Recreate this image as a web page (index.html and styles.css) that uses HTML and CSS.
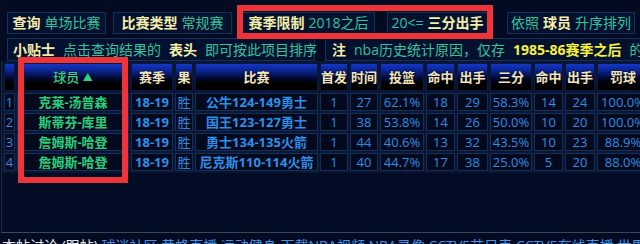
FILE: index.html
```html
<!DOCTYPE html>
<html lang="zh-CN">
<head>
<meta charset="utf-8">
<title>单场比赛查询</title>
<link rel="stylesheet" href="styles.css">
</head>
<body>
<div class="page">
  <div class="filters">
    <div class="row">
      <span class="chip chip-query"><b>查询</b>单场比赛</span>
      <span class="chip chip-type"><b>比赛类型</b>常规赛</span>
      <span class="chip chip-season"><b>赛季限制</b>2018之后</span>
      <span class="chip chip-min">20&lt;=<b>三分出手</b></span>
      <span class="chip chip-order">依照<b>球员</b>升序排列</span>
    </div>
    <div class="row row-tips">
      <span class="chip chip-tip"><b>小贴士</b>点击查询结果的<b>表头</b>即可按此项目排序</span>
      <span class="chip chip-note"><b>注</b>nba历史统计原因，仅存<b class="hl">1985-86赛季之后</b>的数据</span>
    </div>
  </div>

  <div class="results">
    <table class="stats">
      <colgroup>
        <col class="c-idx"><col class="c-player"><col class="c-season"><col class="c-res">
        <col class="c-game"><col class="c-start"><col class="c-min"><col class="c-fg">
        <col class="c-fgm"><col class="c-fga"><col class="c-3p"><col class="c-3pm">
        <col class="c-3pa"><col class="c-ft">
      </colgroup>
      <thead>
        <tr>
          <th></th><th class="sorted">球员 <span class="arrow">▲</span></th><th>赛季</th><th>果</th><th>比赛</th><th>首发</th><th>时间</th>
          <th>投篮</th><th>命中</th><th>出手</th><th>三分</th><th>命中</th><th>出手</th><th>罚球</th>
        </tr>
      </thead>
      <tbody>
        <tr>
          <td>1</td><td class="name">克莱-汤普森</td><td class="bold">18-19</td><td>胜</td><td class="bold">公牛124-149勇士</td>
          <td>1</td><td>27</td><td>62.1%</td><td>18</td><td>29</td><td>58.3%</td><td>14</td><td>24</td><td>100.0%</td>
        </tr>
        <tr>
          <td>2</td><td class="name">斯蒂芬-库里</td><td class="bold">18-19</td><td>胜</td><td class="bold">国王123-127勇士</td>
          <td>1</td><td>38</td><td>53.8%</td><td>14</td><td>26</td><td>50.0%</td><td>10</td><td>20</td><td>100.0%</td>
        </tr>
        <tr>
          <td>3</td><td class="name">詹姆斯-哈登</td><td class="bold">18-19</td><td>胜</td><td class="bold">勇士134-135火箭</td>
          <td>1</td><td>44</td><td>40.6%</td><td>13</td><td>32</td><td>43.5%</td><td>10</td><td>23</td><td>88.9%</td>
        </tr>
        <tr>
          <td>4</td><td class="name">詹姆斯-哈登</td><td class="bold">18-19</td><td>胜</td><td class="bold">尼克斯110-114火箭</td>
          <td>1</td><td>40</td><td>44.7%</td><td>17</td><td>38</td><td>25.0%</td><td>5</td><td>20</td><td>88.0%</td>
        </tr>
      </tbody>
    </table>
  </div>

  <div class="footer"><span class="footer-title">本帖讨论 (跟帖)</span> 球迷社区 黄蜂直播 运动健身 下载NBA视频 NBA录像 CCTV5节目表 CCTV5在线直播 世界杯录像 直播</div>

  <div class="mark mark-season"></div>
  <div class="mark mark-player"></div>
</div>
</body>
</html>
```

FILE: styles.css
```css
html, body {
  margin: 0;
  padding: 0;
  background: #020b21;
}

body {
  width: 640px;
  height: 244px;
  overflow: hidden;
  font-family: "Open Sans", "Noto Sans CJK SC", sans-serif;
}

.page {
  position: relative;
  width: 640px;
  height: 244px;
  overflow: hidden;
}

/* filter chips */
.filters {
  display: flex;
  flex-direction: column;
  gap: 4px;
  padding: 12px 0 0 7px;
}

.row {
  display: flex;
  white-space: nowrap;
}

.chip {
  box-sizing: border-box;
  flex-shrink: 0;
  display: flex;
  align-items: center;
  justify-content: center;
  gap: 4px;
  height: 22px;
  padding: 0 5px;
  border: 1px solid #15305a;
  background: #03112e;
  color: #2fc3a0;
  font-size: 14px;
  line-height: 20px;
}

.chip b {
  color: #f6eea8;
  font-weight: 700;
}

.chip b.hl {
  color: #f4f23c;
}

.chip-query  { width: 99px; }
.chip-type   { width: 119px; margin-left: 7px; }
.chip-season { width: 133px; margin-left: 10px; }
.chip-min    { width: 101px; margin-left: 12px; }
.chip-order  { width: 128px; margin-left: 19px; }

.row-tips .chip {
  height: 23px;
  gap: 8px;
}

.chip-tip {
  width: 308px;
  justify-content: flex-start;
}

.chip-note {
  margin-left: 10px;
  justify-content: flex-start;
  padding-left: 6px;
}

/* result table */
.results {
  box-sizing: border-box;
  width: 640px;
  height: 172px;
  margin-left: 1px;
  border-left: 1px solid #1b2a44;
  border-bottom: 1px solid #3a4657;
  background: #020c24;
  overflow: hidden;
}

.stats {
  table-layout: fixed;
  width: 649px;
  border-collapse: separate;
  border-spacing: 2px;
  background: #081633;
  font-size: 13px;
}

.c-idx    { width: 11px; }
.c-player { width: 112px; }
.c-season { width: 42px; }
.c-res    { width: 18px; }
.c-game   { width: 123px; }
.c-start  { width: 28px; }
.c-min    { width: 28px; }
.c-fg     { width: 44px; }
.c-fgm    { width: 29px; }
.c-fga    { width: 31px; }
.c-3p     { width: 42px; }
.c-3pm    { width: 29px; }
.c-3pa    { width: 30px; }
.c-ft     { width: 52px; }

.stats th,
.stats td {
  padding: 0;
  text-align: center;
  white-space: nowrap;
  overflow: hidden;
}

.stats th {
  height: 26px;
  line-height: 26px;
  border: 1px solid #0a1840;
  background: linear-gradient(to bottom, #1437c6 0%, #0b2592 25%, #020830 55%, #000 75%, #000 100%);
  color: #f3e6bd;
  font-weight: 700;
  text-shadow: 0 0 2px #000;
}

.stats th.sorted {
  color: #30d08a;
  font-weight: 500;
}

.arrow {
  font-size: 10px;
  vertical-align: 1px;
}

.stats td {
  height: 16px;
  line-height: 16px;
  border: 1px solid #12305a;
  background: #040a1d;
  color: #2b8de4;
}

.stats td.bold {
  font-weight: 700;
  color: #2a90ea;
}

.stats td.name {
  font-weight: 700;
  color: #25cf7c;
}

/* footer links */
.footer {
  padding: 3px 0 0 2px;
  font-size: 14px;
  line-height: 20px;
  color: #3b98ee;
  white-space: nowrap;
}

.footer-title {
  color: #e8ecf2;
}

/* red annotation frames laid over the screenshot */
.mark {
  position: absolute;
  box-sizing: border-box;
  border: 6px solid #ee3339;
}

.mark-season {
  left: 237px;
  top: 5px;
  width: 256px;
  height: 34px;
}

.mark-player {
  left: 18px;
  top: 57px;
  width: 110px;
  height: 126px;
}
```
